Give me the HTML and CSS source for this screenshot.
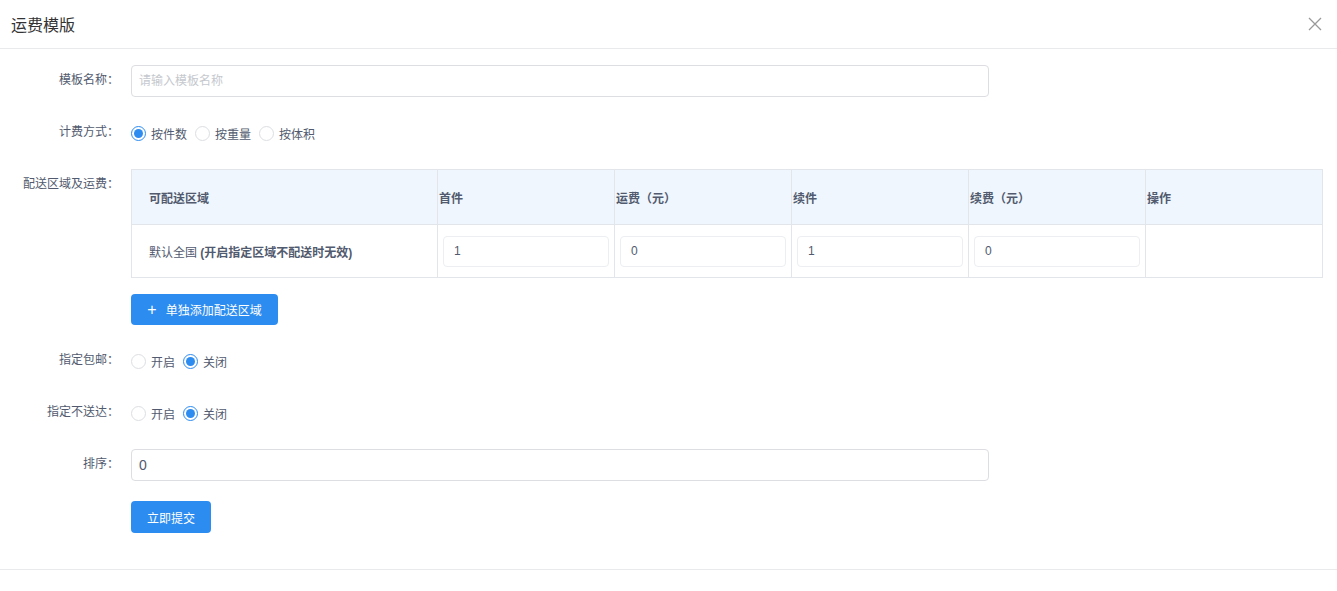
FILE: index.html
```html
<!DOCTYPE html>
<html lang="zh-CN">
<head>
  <meta charset="UTF-8" />
  <title>运费模版</title>
  <link rel="stylesheet" href="styles.css">
</head>
<body>
  <div class="modal">
    <div class="modal-header">
      <span class="modal-title">运费模版</span>
      <span class="modal-close">
        <svg width="14" height="14" viewBox="0 0 14 14"><path d="M1 1L13 13M13 1L1 13" stroke="#999" stroke-width="1.3" fill="none"/></svg>
      </span>
    </div>

    <div class="modal-body">
      <div class="form-item">
        <label class="form-label">模板名称：</label>
        <div class="form-content">
          <input class="input input-name" type="text" placeholder="请输入模板名称" />
        </div>
      </div>

      <div class="form-item">
        <label class="form-label">计费方式：</label>
        <div class="form-content radios">
          <span class="radio checked"><i></i>按件数</span>
          <span class="radio"><i></i>按重量</span>
          <span class="radio"><i></i>按体积</span>
        </div>
      </div>

      <div class="form-item form-item-table">
        <label class="form-label">配送区域及运费：</label>
        <div class="form-content">
          <table class="fee-table">
            <thead>
              <tr>
                <th class="col-area">可配送区域</th>
                <th>首件</th>
                <th>运费（元）</th>
                <th>续件</th>
                <th>续费（元）</th>
                <th>操作</th>
              </tr>
            </thead>
            <tbody>
              <tr>
                <td class="col-area">默认全国 <b>(开启指定区域不配送时无效)</b></td>
                <td><input class="input input-cell" type="text" value="1" /></td>
                <td><input class="input input-cell" type="text" value="0" /></td>
                <td><input class="input input-cell" type="text" value="1" /></td>
                <td><input class="input input-cell" type="text" value="0" /></td>
                <td></td>
              </tr>
            </tbody>
          </table>
          <button class="btn btn-add"><span class="plus">+</span>单独添加配送区域</button>
        </div>
      </div>

      <div class="form-item">
        <label class="form-label">指定包邮：</label>
        <div class="form-content radios">
          <span class="radio"><i></i>开启</span>
          <span class="radio checked"><i></i>关闭</span>
        </div>
      </div>

      <div class="form-item">
        <label class="form-label">指定不送达：</label>
        <div class="form-content radios">
          <span class="radio"><i></i>开启</span>
          <span class="radio checked"><i></i>关闭</span>
        </div>
      </div>

      <div class="form-item">
        <label class="form-label">排序：</label>
        <div class="form-content">
          <input class="input input-name input-sort" type="text" value="0" />
        </div>
      </div>

      <div class="form-item">
        <label class="form-label"></label>
        <div class="form-content">
          <button class="btn btn-submit">立即提交</button>
        </div>
      </div>
    </div>

    <div class="modal-footer"></div>
  </div>
</body>
</html>
```

FILE: styles.css
```css
body {
  margin: 0;
  background: #fff;
  font-family: "Liberation Sans", "Noto Sans CJK SC", sans-serif;
  font-size: 12px;
  color: #515a6e;
}

.modal-header {
  height: 48px;
  border-bottom: 1px solid #e8eaec;
  display: flex;
  align-items: center;
  justify-content: space-between;
  padding: 0 15px 0 11px;
}

.modal-title {
  font-size: 16px;
  color: #333;
}

.modal-close {
  display: flex;
}

.modal-body {
  padding: 16px 0 16px 0;
}

.form-item {
  display: flex;
  align-items: flex-start;
  margin-bottom: 20px;
}

.form-label {
  width: 119px;
  margin-right: 12px;
  text-align: right;
  line-height: 31px;
  flex-shrink: 0;
}

.form-content {
  min-height: 32px;
}

.form-item-table .form-content {
  flex: 1;
  margin-right: 14px;
}

.input {
  box-sizing: border-box;
  border: 1px solid #dcdee2;
  border-radius: 4px;
  font-family: inherit;
  color: #515a6e;
  outline: none;
}

.input-name {
  width: 858px;
  height: 32px;
  padding: 0 7px;
  font-size: 12px;
}

.input-name::placeholder {
  color: #c5c8ce;
}

.input-sort {
  font-size: 14px;
}

.radios {
  display: flex;
  align-items: center;
  height: 31px;
}

.radio {
  display: flex;
  align-items: center;
  margin-right: 8px;
}

.radio i {
  box-sizing: border-box;
  width: 15px;
  height: 15px;
  border: 1px solid #dcdee2;
  border-radius: 50%;
  margin-right: 5px;
  position: relative;
}

.radio.checked i {
  border-color: #2d8cf0;
}

.radio.checked i::after {
  content: "";
  position: absolute;
  left: 2px;
  top: 2px;
  width: 9px;
  height: 9px;
  border-radius: 50%;
  background: #2d8cf0;
}

.fee-table {
  width: 100%;
  border-collapse: collapse;
  table-layout: fixed;
  border: 1px solid #e2e5ea;
}

.fee-table th,
.fee-table td {
  border: 1px solid #e2e5ea;
  text-align: left;
  padding: 0 6px 0 1px;
}

.fee-table th {
  height: 54px;
  background: #f0f6fd;
  font-weight: bold;
}

.fee-table td {
  height: 52px;
  padding: 0 5px;
}

.fee-table .col-area {
  width: 282px;
  padding-left: 17px;
  padding-right: 6px;
}

.input-cell {
  width: 100%;
  height: 31px;
  padding: 0 10px;
  font-size: 12px;
  border-color: #eceef1;
}

.btn {
  display: inline-flex;
  align-items: center;
  justify-content: center;
  border: none;
  border-radius: 4px;
  background: #2d8cf0;
  color: #fff;
  font-family: inherit;
  font-size: 12px;
  cursor: pointer;
}

.btn-add {
  margin-top: 16px;
  width: 147px;
  height: 31px;
}

.plus {
  font-size: 16px;
  margin-right: 9px;
  line-height: 1;
}

.btn-submit {
  width: 80px;
  height: 32px;
}

.modal-footer {
  border-top: 1px solid #e8eaec;
  height: 21px;
}
```
